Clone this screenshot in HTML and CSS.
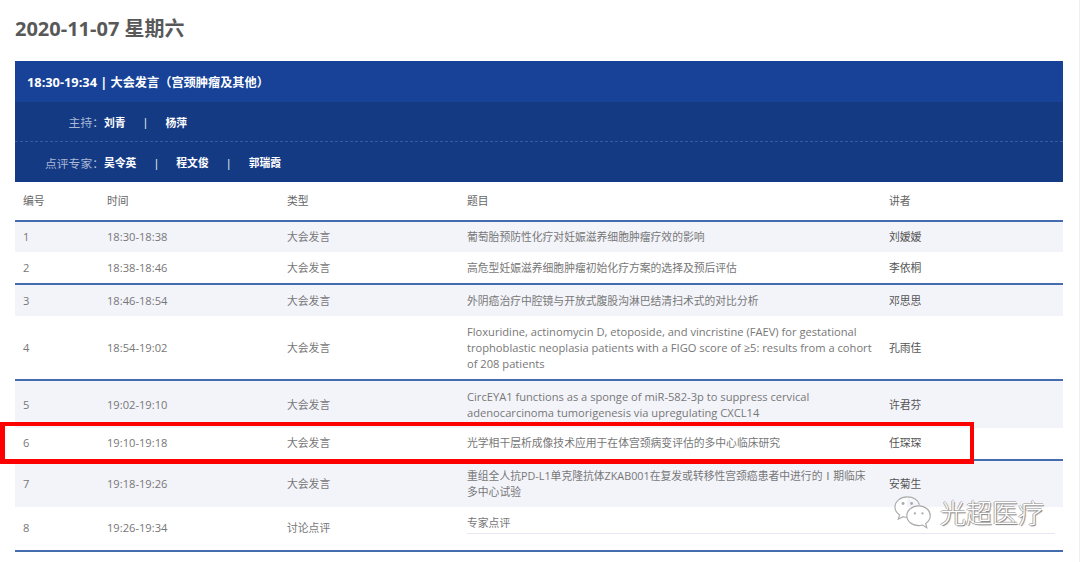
FILE: index.html
```html
<!DOCTYPE html>
<html lang="zh">
<head>
<meta charset="utf-8">
<title>2020-11-07 星期六</title>
<link rel="stylesheet" href="styles.css">
</head>
<body>
<main class="page">
  <h1 class="day">2020-11-07 星期六</h1>
  <section class="session">
    <header class="banner">
      <h2 class="banner-title"><span class="banner-time">18:30-19:34 |</span> 大会发言（宫颈肿瘤及其他）</h2>
      <div class="people people-host">
        <span class="people-label">主持：</span>
        <b>刘青</b><i class="sep">|</i><b>杨萍</b>
      </div>
      <div class="people">
        <span class="people-label">点评专家：</span>
        <b>吴令英</b><i class="sep">|</i><b>程文俊</b><i class="sep">|</i><b>郭瑞霞</b>
      </div>
    </header>
    <table class="talks">
      <colgroup>
        <col class="c-no"><col class="c-time"><col class="c-type"><col class="c-title"><col class="c-speaker">
      </colgroup>
      <thead>
        <tr><th>编号</th><th>时间</th><th>类型</th><th>题目</th><th>讲者</th></tr>
      </thead>
      <tbody>
        <tr class="odd r1"><td class="en">1</td><td class="en">18:30-18:38</td><td>大会发言</td><td>葡萄胎预防性化疗对妊娠滋养细胞肿瘤疗效的影响</td><td class="speaker">刘嫒嫒</td></tr>
        <tr class="end r2"><td class="en">2</td><td class="en">18:38-18:46</td><td>大会发言</td><td>高危型妊娠滋养细胞肿瘤初始化疗方案的选择及预后评估</td><td class="speaker">李依桐</td></tr>
        <tr class="odd r3"><td class="en">3</td><td class="en">18:46-18:54</td><td>大会发言</td><td>外阴癌治疗中腔镜与开放式腹股沟淋巴结清扫术式的对比分析</td><td class="speaker">邓思思</td></tr>
        <tr class="end r4"><td class="en">4</td><td class="en">18:54-19:02</td><td>大会发言</td><td class="en">Floxuridine, actinomycin D, etoposide, and vincristine (FAEV) for gestational trophoblastic neoplasia patients with a FIGO score of ≥5: results from a cohort of 208 patients</td><td class="speaker">孔雨佳</td></tr>
        <tr class="odd r5"><td class="en">5</td><td class="en">19:02-19:10</td><td>大会发言</td><td class="en">CircEYA1 functions as a sponge of miR-582-3p to suppress cervical adenocarcinoma tumorigenesis via upregulating CXCL14</td><td class="speaker">许君芬</td></tr>
        <tr class="end r6"><td class="en">6</td><td class="en">19:10-19:18</td><td>大会发言</td><td>光学相干层析成像技术应用于在体宫颈病变评估的多中心临床研究</td><td class="speaker">任琛琛</td></tr>
        <tr class="odd r7"><td class="en">7</td><td class="en">19:18-19:26</td><td>大会发言</td><td>重组全人抗PD-L1单克隆抗体ZKAB001在复发或转移性宫颈癌患者中进行的Ⅰ期临床多中心试验</td><td class="speaker">安菊生</td></tr>
        <tr class="end r8"><td class="en">8</td><td class="en">19:26-19:34</td><td>讨论点评</td><td class="underlined">专家点评</td><td class="speaker"></td></tr>
      </tbody>
    </table>
  </section>
  <div class="highlight"></div>
  <div class="watermark">
    <svg class="wm-icon" width="42" height="36" viewBox="0 0 42 38" aria-hidden="true">
      <path class="wm-stroke" d="M15 2C7.500 2 2 6.800 2 12.800c0 3.400 1.800 6.200 4.800 8.200L5.500 25.500l5-2.600c1.400.4 2.700.6 4 .6" />
      <path class="wm-stroke" d="M15 2c6.200 0 11.400 3.400 12.800 8.300" />
      <path class="wm-stroke" d="M27 11.500c-7 0-12.500 4.600-12.500 10.400S20 32.300 27 32.300c1.500 0 2.800-.2 4-.6l4.600 2.800-1.200-4.400c3-1.900 4.800-4.900 4.800-8.200 0-5.800-5.200-10.400-12.200-10.400z" />
      <circle class="wm-dot" cx="10.500" cy="9" r="1.500"/>
      <circle class="wm-dot" cx="19.500" cy="9" r="1.500"/>
      <circle class="wm-dot" cx="23" cy="19.500" r="1.200"/>
      <circle class="wm-dot" cx="31" cy="19.500" r="1.200"/>
    </svg>
    <span class="wm-text">光超医疗</span>
  </div>
</main>
</body>
</html>
```

FILE: styles.css
```css
* { box-sizing: border-box; }
html, body { margin: 0; padding: 0; background: #fff; }
body {
  width: 1080px;
  height: 562px;
  overflow: hidden;
  font-family: "Open Sans", "Noto Sans CJK SC", sans-serif;
  color: #666;
}
.page {
  position: relative;
  height: 562px;
  padding: 0 16px 0 15px;
  border-right: 1px solid #f0f0f0;
}
.day {
  margin: 0;
  padding-top: 15px;
  height: 61px;
  font-size: 20px;
  line-height: 28px;
  font-weight: 700;
  color: #585858;
}
.banner { background: #153a84; color: #fff; }
.banner-title {
  margin: 0;
  height: 41px;
  padding-left: 12px;
  background: #174298;
  font-size: 12.200px;
  line-height: 43px;
  font-weight: 700;
}
.banner-time { font-size: 12.800px; }
.people {
  display: flex;
  align-items: center;
  height: 40px;
  font-size: 10.800px;
}
.people-host { height: 40px; border-bottom: 1px dashed #3a5a9b; }
.people-label {
  width: 89px;
  font-size: 11.800px;
  text-align: right;
  color: #aab9d6;
}
.people b { font-weight: 700; }
.sep { font-style: normal; margin: 0 17px; }
.talks {
  width: 100%;
  table-layout: fixed;
  border-collapse: separate;
  border-spacing: 0;
  font-size: 10.800px;
  line-height: 16px;
}
.c-no { width: 84px; }
.c-time, .c-type { width: 180px; }
.c-title { width: 422px; }
.talks th {
  height: 40px;
  padding: 0 8px;
  text-align: left;
  font-weight: 400;
  color: #666;
  border-bottom: 2px solid #456cae;
}
.talks td { padding: 0 8px; vertical-align: middle; color: #777; }
.talks .en { font-size: 11.150px; }
.talks .speaker { color: #555; }
.odd { background: #f3f4fa; }
.end td { border-bottom: 2px solid #456cae; }
.r1 { height: 30px; }
.r2 { height: 33px; }
.r3 { height: 31px; }
.r4 { height: 65px; }
.r5 { height: 47px; }
.r6 { height: 33px; }
.r7 { height: 46px; }
.r8 { height: 45px; }
.talks .r6 td, .talks .r8 td { padding-bottom: 2px; }
.talks .r8 .underlined { position: relative; vertical-align: top; padding-top: 8px; padding-bottom: 0; }
.underlined::after {
  content: "";
  position: absolute;
  left: 8px;
  right: -174px;
  bottom: 16px;
  border-bottom: 1px solid #e6e9f4;
}
.highlight {
  position: absolute;
  left: 0;
  top: 422px;
  width: 974px;
  height: 42px;
  border: 4px solid #f00;
  border-left-width: 5px;
  border-bottom-width: 5px;
}
.watermark {
  position: absolute;
  left: 892px;
  top: 495px;
  display: flex;
  align-items: center;
  gap: 6px;
}
.wm-icon { display: block; }
.wm-stroke { fill: rgba(255,255,255,.85); stroke: #aaa; stroke-width: 1.200; }
.wm-dot { fill: #aaa; }
.wm-text {
  font-size: 26px;
  line-height: 32px;
  font-weight: 300;
  color: #fff;
  text-shadow: 1px 1px 1px #777, -1px 0 0 #aaa, 0 -1px 0 #bbb;
}
```
